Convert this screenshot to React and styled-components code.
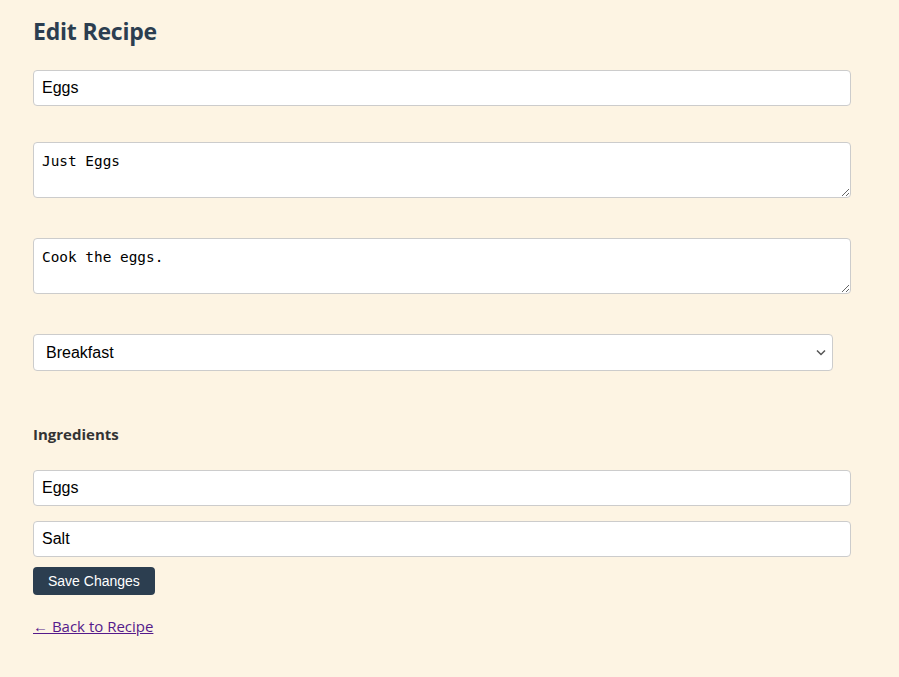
import React from "react";
import styled, { createGlobalStyle } from "styled-components";

const Global = createGlobalStyle`
  html, body { margin: 0; padding: 0; background: #fdf4e3; }
  body { font-family: "Open Sans", "Noto Sans", sans-serif; color: #333; }
`;

const Page = styled.main`
  width: 818px;
  padding: 14px 0 40px 33px;
  display: flex;
  flex-direction: column;
  align-items: flex-start;
`;

const Title = styled.h1`
  margin: 0 0 22px;
  font-size: 23px;
  line-height: 34px;
  font-weight: 700;
  color: #2c3e50;
  letter-spacing: -0.2px;
`;

const TextInput = styled.input`
  box-sizing: border-box;
  width: 818px;
  height: 36px;
  margin: 0 0 ${(p) => p.$gap || 0}px;
  padding: 0 8px;
  border: 1px solid #ccc;
  border-radius: 4px;
  background: #fff;
  font-family: "Liberation Sans", Arial, sans-serif;
  font-size: 16px;
  color: #000;
  outline: none;
`;

const TextArea = styled.textarea`
  display: block;
  box-sizing: border-box;
  width: 818px;
  height: 56px;
  margin: 0 0 40px;
  padding: 10px 8px 8px;
  border: 1px solid #ccc;
  border-radius: 4px;
  background: #fff;
  font-family: "DejaVu Sans Mono", "Liberation Mono", monospace;
  font-size: 14.4px;
  line-height: 17px;
  color: #000;
  resize: vertical;
  outline: none;
`;

const SelectWrap = styled.div`
  position: relative;
  width: 800px;
  height: 37px;
  margin: 0 0 53px;
`;

const Select = styled.select`
  box-sizing: border-box;
  width: 100%;
  height: 100%;
  padding: 0 30px 0 12px;
  border: 1px solid #ccc;
  border-radius: 4px;
  background: #fff;
  font-family: "Liberation Sans", Arial, sans-serif;
  font-size: 16px;
  color: #000;
  outline: none;
  appearance: none;
  -webkit-appearance: none;
`;

const Chevron = styled.svg`
  position: absolute;
  right: 7px;
  top: 15px;
  width: 10px;
  height: 7px;
  pointer-events: none;
`;

const Label = styled.h3`
  margin: 0 0 26px;
  font-size: 15px;
  line-height: 20px;
  font-weight: 700;
  color: #333;
`;

const Button = styled.button`
  margin: 0 0 22px;
  height: 28px;
  padding: 0 15px;
  border: none;
  border-radius: 4px;
  background: #2c3e50;
  color: #fff;
  font-family: "Liberation Sans", Arial, sans-serif;
  font-size: 14px;
  cursor: pointer;
`;

const BackLink = styled.a`
  font-size: 15px;
  line-height: 18px;
  color: #551a8b;
  text-decoration: underline;
`;

export default function App() {
  return (
    <>
      <Global />
      <Page>
        <Title>Edit Recipe</Title>
        <TextInput defaultValue="Eggs" $gap={36} />
        <TextArea defaultValue="Just Eggs" />
        <TextArea defaultValue="Cook the eggs." />
        <SelectWrap>
          <Select defaultValue="Breakfast">
            <option>Breakfast</option>
            <option>Lunch</option>
            <option>Dinner</option>
          </Select>
          <Chevron viewBox="0 0 10 7">
            <path d="M1 1.5 L5 5.5 L9 1.5" fill="none" stroke="#555" strokeWidth="1.5" />
          </Chevron>
        </SelectWrap>
        <Label>Ingredients</Label>
        <TextInput defaultValue="Eggs" $gap={15} />
        <TextInput defaultValue="Salt" $gap={10} />
        <Button type="button">Save Changes</Button>
        <BackLink href="#">← Back to Recipe</BackLink>
      </Page>
    </>
  );
}
